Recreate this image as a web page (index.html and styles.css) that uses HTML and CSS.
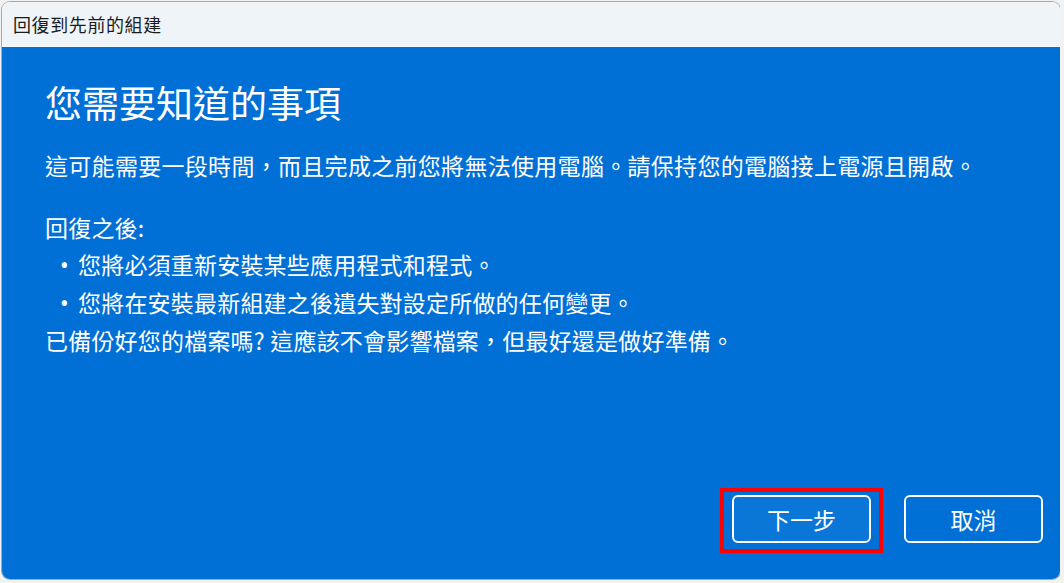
FILE: index.html
```html
<!DOCTYPE html>
<html lang="zh-Hant">

<head>
    <meta charset="UTF-8">
    <title>回復到先前的組建</title>
    <link rel="stylesheet" href="styles.css">
</head>

<body>
    <div class="window">
        <div class="title-bar">回復到先前的組建</div>
        <div class="content">
            <h1>您需要知道的事項</h1>
            <p class="intro">這可能需要一段時間，而且完成之前您將無法使用電腦。請保持您的電腦接上電源且開啟。</p>
            <div class="details">
                <p>回復之後:</p>
                <ul class="notes">
                    <li>您將必須重新安裝某些應用程式和程式。</li>
                    <li>您將在安裝最新組建之後遺失對設定所做的任何變更。</li>
                </ul>
                <p>已備份好您的檔案嗎? 這應該不會影響檔案，但最好還是做好準備。</p>
            </div>
            <div class="actions">
                <span class="highlight">
                    <button class="button button-next" type="button">下一步</button>
                </span>
                <button class="button" type="button">取消</button>
            </div>
        </div>
    </div>
</body>

</html>
```

FILE: styles.css
```css
body {
    margin: 0;
    padding: 2px;
    width: 1060px;
    height: 583px;
    box-sizing: border-box;
    background-color: #f2f2f2;
    font-family: "Noto Sans CJK TC", "Noto Sans", sans-serif;
    overflow: hidden;
}

.window {
    width: 1058px;
    height: 577px;
    display: flex;
    flex-direction: column;
    border-radius: 8px;
    overflow: hidden;
    box-shadow: 0 0 0 1px #a9a9a9;
}

.title-bar {
    height: 44px;
    display: flex;
    align-items: center;
    padding-left: 11px;
    background-color: #eff4f9;
    border-bottom: 1px solid #f8fafc;
    color: #1b1b1b;
    font-size: 18px;
    letter-spacing: 0.6px;
}

.content {
    flex: 1;
    display: flex;
    flex-direction: column;
    padding: 30px 17px 36px 43px;
    background-color: #0070d6;
    color: #fff;
}

h1 {
    margin: 0;
    font-size: 37px;
    font-weight: normal;
    line-height: 50px;
}

.intro {
    margin: 20px 0 0;
    font-size: 23px;
    line-height: 37px;
    letter-spacing: 0.3px;
}

.details {
    margin-top: 25px;
    font-size: 23px;
    line-height: 37px;
    letter-spacing: 0.2px;
}

.details p {
    margin: 0;
}

.notes {
    margin: 0;
    padding: 0 0 0 15px;
    list-style: none;
}

.notes li::before {
    content: "•";
    display: inline-block;
    width: 18px;
    font-family: "Noto Sans", sans-serif;
}

.actions {
    margin-top: auto;
    display: flex;
    justify-content: flex-end;
    gap: 33px;
}

.highlight {
    position: relative;
    display: flex;
}

.highlight::after {
    content: "";
    position: absolute;
    top: -7px;
    bottom: -10px;
    left: -12px;
    right: -12px;
    border: 4px solid #ff0000;
    pointer-events: none;
}

.button {
    width: 139px;
    height: 48px;
    border: 2px solid #fff;
    border-radius: 6px;
    background-color: #0070d6;
    color: #fff;
    font-family: inherit;
    font-size: 23px;
    cursor: pointer;
}

.button-next {
    background-color: #0a77d8;
}
```
